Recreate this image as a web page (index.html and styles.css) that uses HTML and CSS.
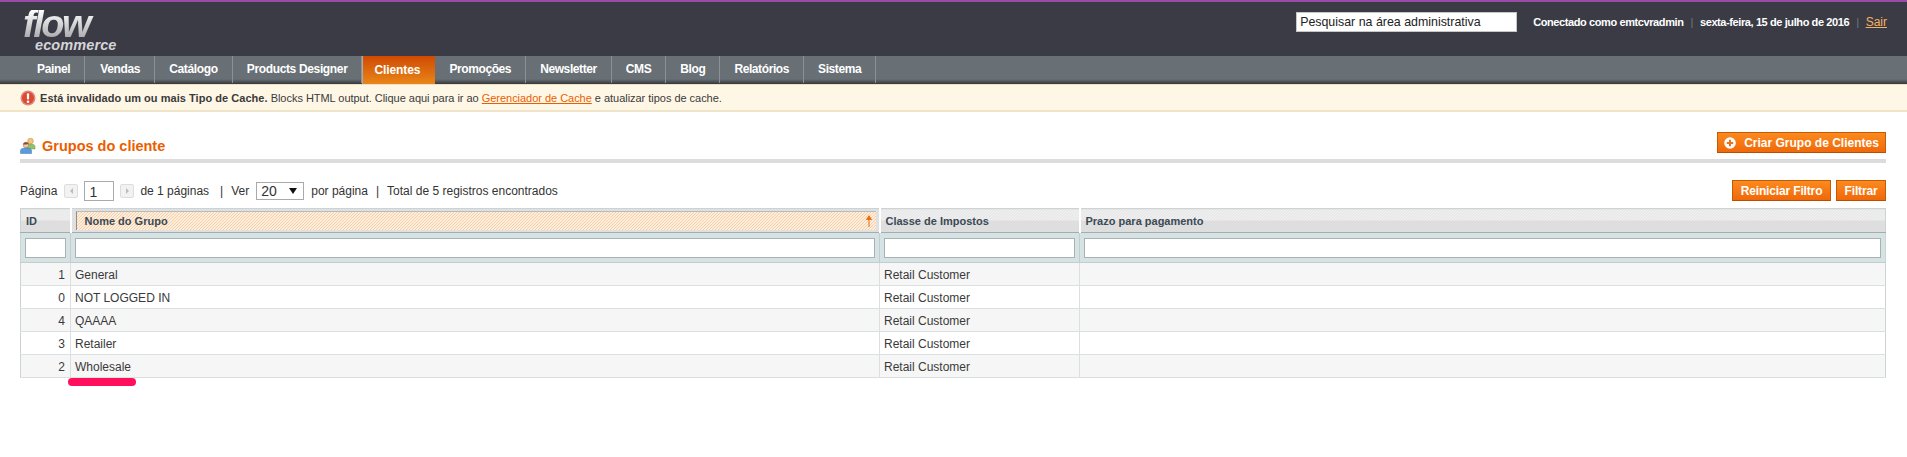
FILE: index.html
```html
<!DOCTYPE html>
<html lang="pt">
<head>
<meta charset="utf-8">
<title>Grupos do cliente</title>
<link rel="stylesheet" href="styles.css">
</head>
<body>
<header class="top">
  <div class="logo"><span class="logo-flow">flow</span><span class="logo-sub">ecommerce</span></div>
  <div class="top-right">
    <div class="search">Pesquisar na área administrativa</div>
    <div class="user">
      <span>Conectado como emtcvradmin</span><span class="sep">|</span><span>sexta-feira, 15 de julho de 2016</span><span class="sep">|</span><a class="logout" href="#">Sair</a>
    </div>
  </div>
</header>
<nav class="nav">
  <a class="nav-item" href="#">Painel</a>
  <a class="nav-item" href="#">Vendas</a>
  <a class="nav-item" href="#">Catálogo</a>
  <a class="nav-item" href="#">Products Designer</a>
  <a class="nav-item active" href="#">Clientes</a>
  <a class="nav-item" href="#">Promoções</a>
  <a class="nav-item" href="#">Newsletter</a>
  <a class="nav-item" href="#">CMS</a>
  <a class="nav-item" href="#">Blog</a>
  <a class="nav-item" href="#">Relatórios</a>
  <a class="nav-item" href="#">Sistema</a>
</nav>
<div class="notice">
  <svg class="notice-icon" viewBox="0 0 16 16" width="16" height="16"><circle cx="8" cy="8" r="7.500" fill="#e08a78"/><circle cx="8" cy="8" r="6" fill="#dc4a34"/><rect x="6.900" y="3.200" width="2.200" height="6.400" rx="1" fill="#fff"/><circle cx="8" cy="11.800" r="1.300" fill="#fff"/></svg>
  <span class="notice-text"><b>Está invalidado um ou mais Tipo de Cache.</b> Blocks HTML output. Clique aqui para ir ao <a href="#">Gerenciador de Cache</a> e atualizar tipos de cache.</span>
</div>
<main class="main">
  <div class="title-bar">
    <h3 class="title">
      <svg class="title-icon" viewBox="0 0 16 16" width="16" height="16"><circle cx="10.500" cy="3" r="2.800" fill="#f2c680" stroke="#d08f3c" stroke-width=".6"/><path d="M7 11V8.200C7 6.600 8.500 6 10.500 6s4.500.6 4.500 2.200V11z" fill="#8fc46a" stroke="#6d9a4e" stroke-width=".5"/><circle cx="6" cy="7" r="2.800" fill="#eec8a0" stroke="#a0663c" stroke-width=".5"/><path d="M6 4.200c-1.800 0-2.800 1-2.800 2.300 1.400 0 3.800-.2 5.600-.3C8.500 5 7.500 4.200 6 4.200z" fill="#8a4a34"/><path d="M.5 15.500v-3C.5 10.800 3 10 6 10s5.500.8 5.500 2.500v3z" fill="#5b9bdc" stroke="#3b72ad" stroke-width=".5"/></svg>
      Grupos do cliente
    </h3>
    <button class="btn btn-add" type="button">
      <svg viewBox="0 0 12 12" width="12" height="12"><circle cx="6" cy="6" r="5.800" fill="#fff"/><path d="M6 2.800v6.400M2.800 6h6.400" stroke="#e8741a" stroke-width="2"/></svg>
      Criar Grupo de Clientes
    </button>
  </div>
  <div class="pager">
    <div class="pager-left">
      <span>Página</span>
      <span class="arrow"><i class="tri tri-l"></i></span>
      <span class="page-input">1</span>
      <span class="arrow"><i class="tri tri-r"></i></span>
      <span>de 1 páginas</span>
      <span class="pipe">|</span>
      <span>Ver</span>
      <span class="page-select"><span>20</span><i class="caret"></i></span>
      <span>por página</span>
      <span class="pipe pipe-tight">|</span>
      <span>Total de 5 registros encontrados</span>
    </div>
    <div class="pager-actions">
      <button class="btn btn-reset" type="button">Reiniciar Filtro</button>
      <button class="btn btn-filter" type="button">Filtrar</button>
    </div>
  </div>
  <table class="grid">
    <colgroup><col class="c-id"><col class="c-name"><col class="c-class"><col class="c-term"></colgroup>
    <thead>
      <tr class="heads">
        <th>ID</th>
        <th class="sorted"><div class="sorted-in"><span>Nome do Grupo</span><svg viewBox="0 0 8 12" width="8" height="12"><path d="M4 12V2M1.500 4.500 4 .8l2.500 3.700z" stroke="#f06d10" fill="#f06d10" stroke-width="1"/></svg></div></th>
        <th>Classe de Impostos</th>
        <th>Prazo para pagamento</th>
      </tr>
      <tr class="filters">
        <th><div class="fi"></div></th>
        <th><div class="fi"></div></th>
        <th><div class="fi"></div></th>
        <th><div class="fi"></div></th>
      </tr>
    </thead>
    <tbody>
      <tr class="odd"><td class="num">1</td><td>General</td><td>Retail Customer</td><td></td></tr>
      <tr><td class="num">0</td><td>NOT LOGGED IN</td><td>Retail Customer</td><td></td></tr>
      <tr class="odd"><td class="num">4</td><td>QAAAA</td><td>Retail Customer</td><td></td></tr>
      <tr><td class="num">3</td><td>Retailer</td><td>Retail Customer</td><td></td></tr>
      <tr class="odd"><td class="num">2</td><td>Wholesale</td><td>Retail Customer</td><td></td></tr>
    </tbody>
  </table>
</main>
<div class="scribble"></div>
</body>
</html>
```

FILE: styles.css
```css
* { box-sizing: border-box; }
html, body { margin: 0; padding: 0; }
body {
  position: relative;
  height: 457px;
  overflow: hidden;
  background: #fff;
  color: #2f2f2f;
  font: 12px/16px "Liberation Sans", Arial, sans-serif;
}
a { color: inherit; }

/* Top bar */
.top {
  display: flex;
  justify-content: space-between;
  height: 56px;
  padding: 0 20px 0 23px;
  background: #3a3b45;
  border-top: 2px solid #9a4aa8;
}
.logo { display: flex; flex-direction: column; width: 100px; font-style: italic; font-weight: bold; }
.logo-flow {
  height: 29px;
  margin-top: 8px;
  font-size: 38px;
  line-height: 29px;
  letter-spacing: -2.500px;
  background: linear-gradient(#ffffff, #a8a8ac);
  -webkit-background-clip: text;
  background-clip: text;
  color: transparent;
}
.logo-sub { margin: 0 0 0 12px; font-size: 14.500px; line-height: 12px; letter-spacing: .1px; color: #d4d4d8; }
.top-right { display: flex; align-items: flex-start; padding-top: 10px; }
.search {
  width: 221px;
  height: 20px;
  padding-left: 3px;
  background: #fff;
  border: 1px solid #c6c6c6;
  color: #222;
  font-size: 12.400px;
  line-height: 18px;
}
.user {
  display: flex;
  align-items: center;
  height: 20px;
  margin-left: 16px;
  color: #fff;
  font-weight: bold;
  font-size: 11px;
  letter-spacing: -.4px;
  white-space: nowrap;
}
.sep { margin: 0 7px; color: #777; font-weight: normal; }
.logout { color: #f4b162; font-weight: normal; font-size: 12px; letter-spacing: 0; }

/* Navigation */
.nav {
  display: flex;
  height: 28px;
  padding-left: 17px;
  background: linear-gradient(#687076 0, #687076 23px, #4a4e52 26px, #33363a 28px);
}
.nav-item {
  display: flex;
  align-items: center;
  height: 27px;
  padding: 0 14px 1px;
  border-right: 1px solid #8b9297;
  color: #fff;
  font-weight: bold;
  text-decoration: none;
  font-size: 12px;
  letter-spacing: -.35px;
}
.nav-item:first-child { padding-left: 20px; }
.nav-item:nth-child(2) { padding-left: 15px; }
.nav-item.active {
  background: linear-gradient(#cf4a04, #e98618);
  border-left: 1px solid #a8adb0;
  border-right: 0;
  height: 28px;
  padding: 0 15px 1px 11px;
  letter-spacing: -.1px;
}
.active ~ .nav-item { letter-spacing: -.4px; }

/* Notice */
.notice {
  display: flex;
  align-items: center;
  gap: 4px;
  height: 28px;
  padding-left: 20px;
  background: #fff7e6;
  border-top: 1px solid #eee0c0;
  border-bottom: 2px solid #f0e4c8;
  font-size: 11px;
  color: #3a3a3a;
}
.notice-icon { flex: none; }
.notice-text { letter-spacing: -.03px; }
.notice-text b { letter-spacing: .04px; }
.notice a { color: #eb5e00; }

/* Main */
.main { padding: 0 21px 0 20px; }
.title-bar {
  display: flex;
  align-items: flex-start;
  justify-content: space-between;
  height: 51px;
  padding-top: 20px;
  border-bottom: 4px solid #dcdcdc;
}
.title {
  display: flex;
  align-items: center;
  gap: 6px;
  margin: 4px 0 0;
  color: #eb5e00;
  font-size: 14.500px;
  line-height: 20px;
  font-weight: bold;
}
.btn {
  display: inline-flex;
  align-items: center;
  justify-content: center;
  gap: 8px;
  height: 21px;
  padding: 0;
  background: linear-gradient(#fb8a1e, #f1680a);
  border: 1px solid #c25a06;
  border-bottom-color: #b64f00;
  color: #fff;
  font: bold 12px/16px "Liberation Sans", Arial, sans-serif;
  white-space: nowrap;
}
.btn-add { width: 169px; }
.btn-reset { width: 99px; letter-spacing: -.15px; }
.btn-filter { width: 50px; letter-spacing: -.15px; }

/* Pager */
.pager {
  display: flex;
  justify-content: space-between;
  align-items: flex-start;
  height: 45px;
  padding-top: 18px;
}
.pager-left { display: flex; align-items: center; height: 20px; gap: 6px; color: #333; }
.arrow {
  display: flex;
  align-items: center;
  justify-content: center;
  width: 14px;
  height: 14px;
  background: #f2f2f2;
  border: 1px solid #dddddd;
  border-radius: 2px;
}
.arrow:nth-child(2) { margin-left: 1px; }
.tri { width: 0; height: 0; border-style: solid; border-color: transparent; border-width: 3px; }
.tri-l { border-right-color: #bcbcbc; border-left-width: 0; }
.tri-r { border-left-color: #bcbcbc; border-right-width: 0; }
.page-input {
  width: 30px;
  height: 20px;
  padding: 2px 0 0 4px;
  border: 1px solid #aaa;
  font-size: 14px;
}
.pipe { margin: 0 2px 0 5px; }
.pipe-tight { margin: 0 2px; }
.page-select {
  display: flex;
  align-items: center;
  justify-content: space-between;
  width: 48px;
  height: 18px;
  margin: 0 1px;
  padding: 0 6px 0 4px;
  border: 1px solid #aaa;
  font-size: 14px;
}
.caret { width: 0; height: 0; border: 4px solid transparent; border-top: 6px solid #111; border-bottom: 0; }
.pager-actions { display: flex; gap: 5px; margin-top: -1px; }

/* Grid */
.grid {
  width: 1866px;
  border-collapse: collapse;
  table-layout: fixed;
  border: 1px solid #cbd3d4;
}
.c-id { width: 50px; }
.c-name { width: 809px; }
.c-class { width: 200px; }
.heads th {
  height: 24px;
  padding: 0 0 0 5px;
  text-align: left;
  color: #3b4a55;
  font-size: 11px;
  font-weight: bold;
  border-left: 2px solid #fff;
  border-bottom: 1px solid #a5acae;
  background:
    linear-gradient(#0000 11px, #dedede 11px),
    linear-gradient(135deg, #f2f2f2 33%, #dedede 33% 50%, #f2f2f2 50% 83%, #dedede 83%) 0 0 / 3px 3px;
}
.heads th:first-child { border-left: 0; }
.heads th.sorted { padding: 2px 3px 2px 4px; background: #e0e0e0; }
.sorted-in {
  display: flex;
  align-items: center;
  justify-content: space-between;
  height: 19px;
  padding: 0 3px 0 8px;
  border-left: 1px solid #8a8f92;
  border-top: 1px solid #b9bcbc;
  background: linear-gradient(135deg, #fdeedd 33%, #f6cfa8 33% 50%, #fdeedd 50% 83%, #f6cfa8 83%) 0 0 / 3px 3px;
}
.filters th {
  height: 30px;
  padding: 4px;
  background: #d6e3e5;
  border-left: 1px solid #c3cdce;
  border-bottom: 1px solid #c3cdce;
}
.fi { height: 20px; background: #fff; border: 1px solid #abb0b1; }
.grid td {
  height: 23px;
  padding: 1px 4px 0;
  font-size: 12px;
  color: #3a3a3a;
  border-left: 1px solid #dadfe0;
  border-bottom: 1px solid #dadfe0;
}
.grid td:first-child, .filters th:first-child { border-left: 0; }
.grid .num { text-align: right; padding-right: 5px; }
.odd td { background: #f6f6f6; }

/* Marker drawn over the screenshot */
.scribble {
  position: absolute;
  left: 68px;
  top: 378px;
  width: 68px;
  height: 8px;
  border-radius: 4px;
  background: #ff0f5c;
}
```
